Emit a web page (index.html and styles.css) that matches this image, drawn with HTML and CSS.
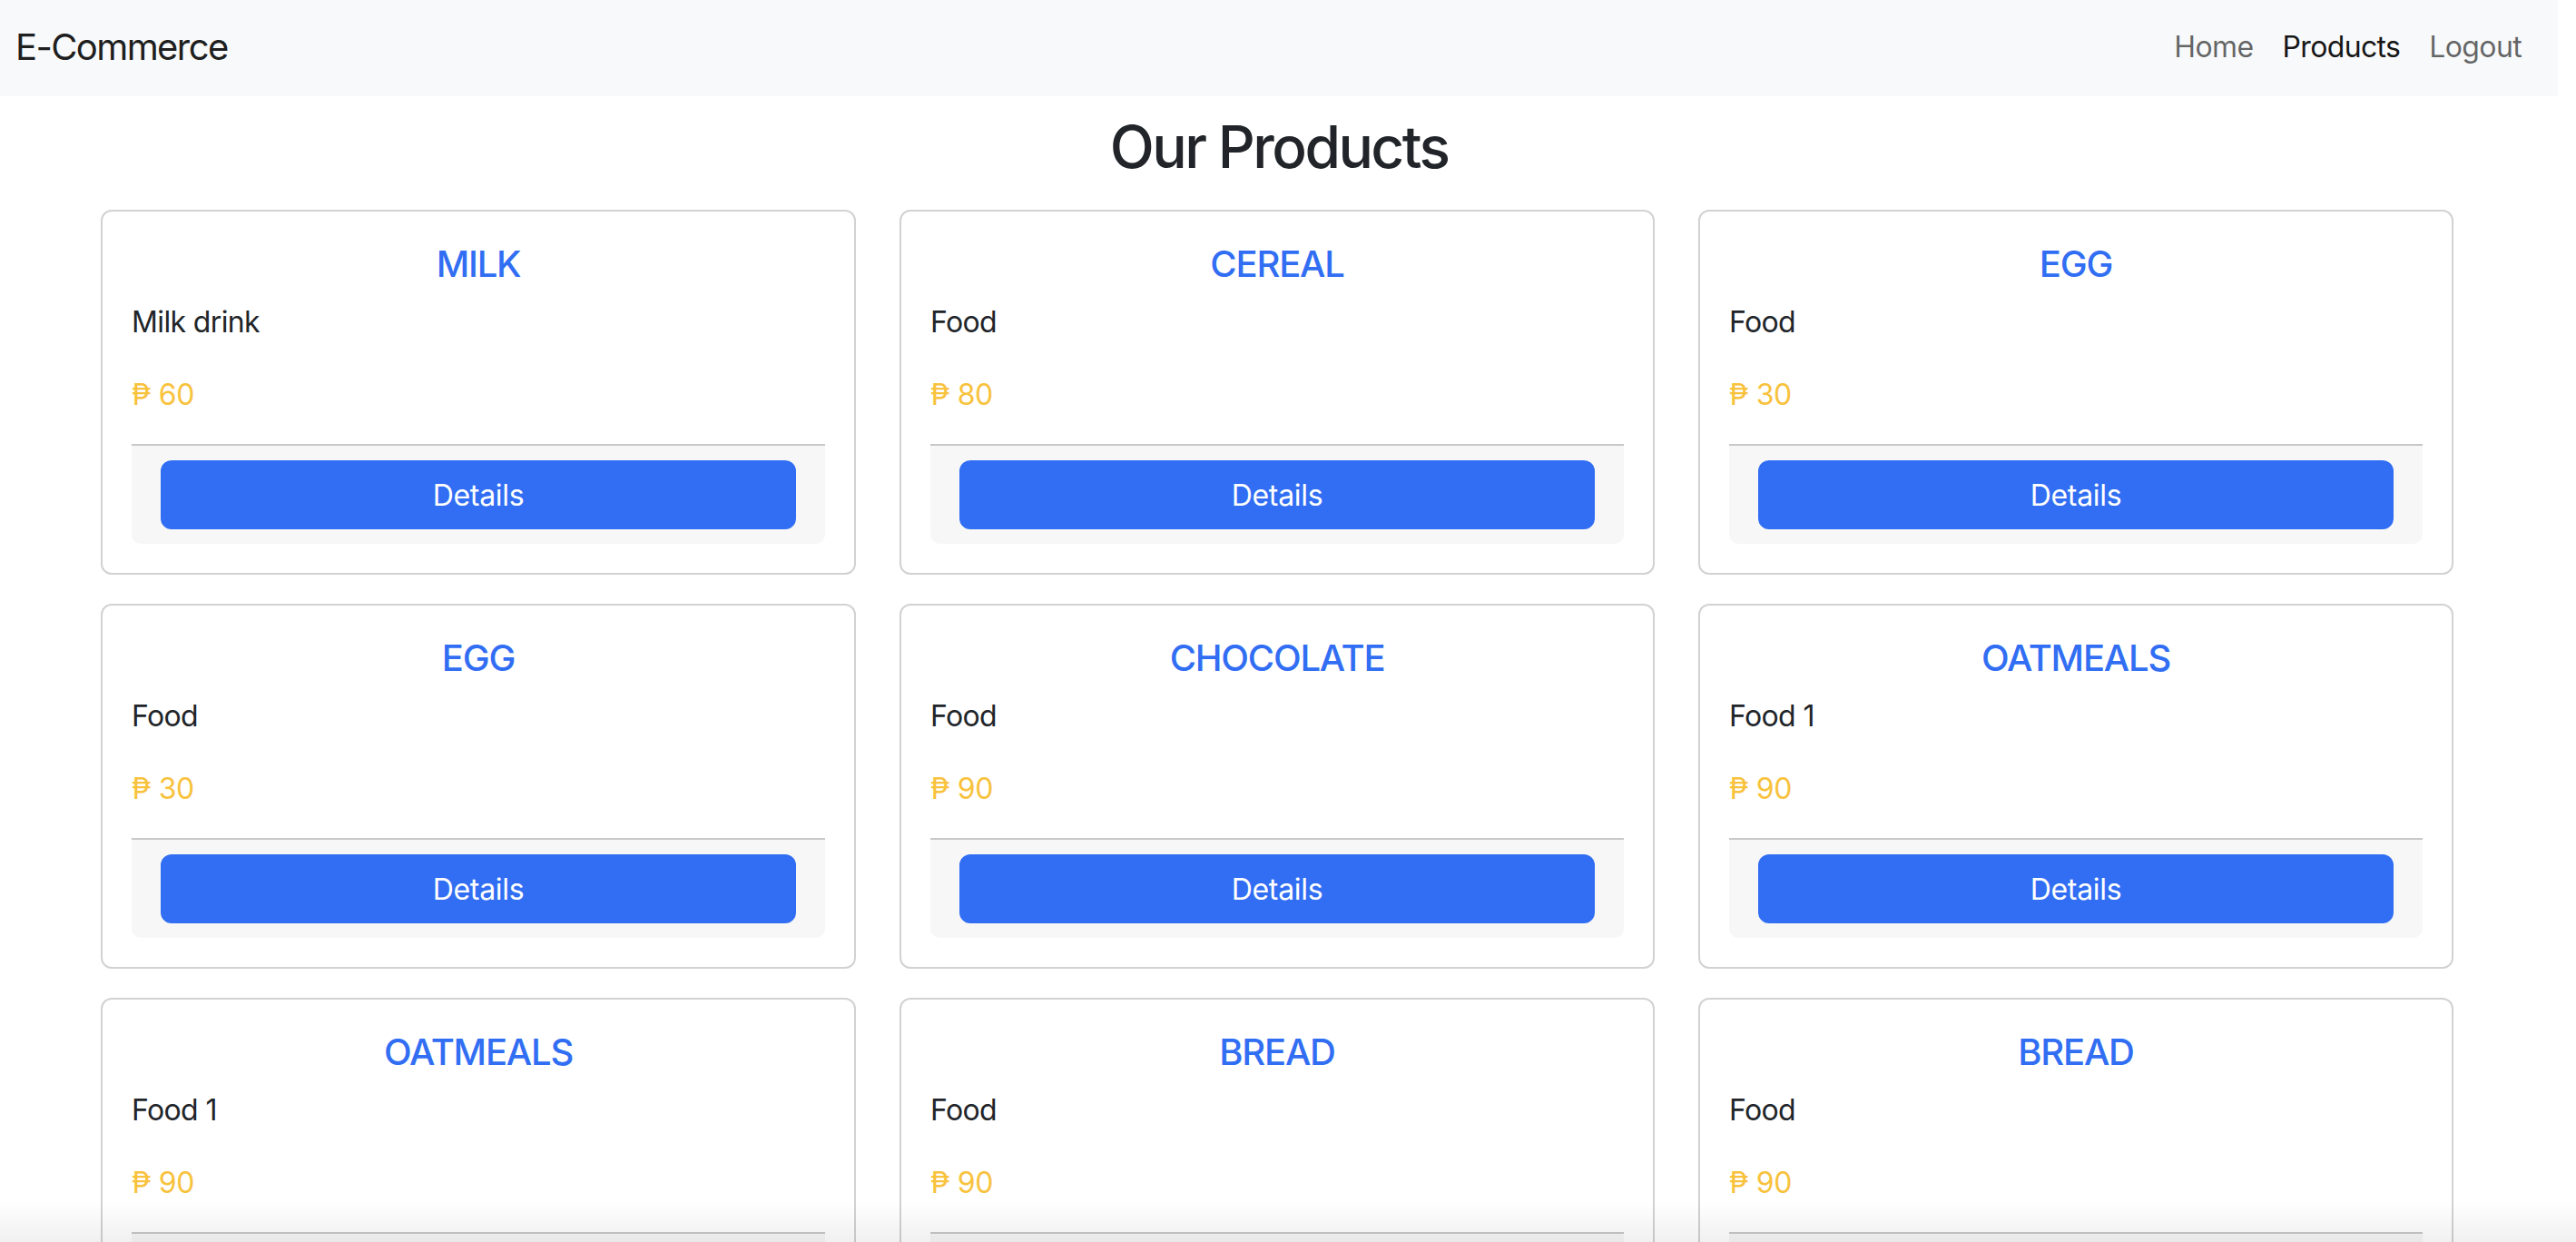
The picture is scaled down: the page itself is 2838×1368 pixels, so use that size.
FILE: index.html
```html
<!DOCTYPE html>
<html lang="en">
<head>
<meta charset="utf-8">
<title>E-Commerce</title>
<link rel="stylesheet" href="styles.css">
</head>
<body>
<div class="page">
  <nav class="navbar">
    <a class="brand" href="#">E-Commerce</a>
    <ul class="nav">
      <li><a class="nav-link" href="#">Home</a></li>
      <li><a class="nav-link active" href="#">Products</a></li>
      <li><a class="nav-link" href="#">Logout</a></li>
    </ul>
  </nav>
  <main>
    <h2 class="page-title">Our Products</h2>
    <div class="products">
      <div class="card"><h5 class="card-title">MILK</h5><p class="desc">Milk drink</p><p class="price">₱ 60</p><div class="card-footer"><button class="btn">Details</button></div></div>
      <div class="card"><h5 class="card-title">CEREAL</h5><p class="desc">Food</p><p class="price">₱ 80</p><div class="card-footer"><button class="btn">Details</button></div></div>
      <div class="card"><h5 class="card-title">EGG</h5><p class="desc">Food</p><p class="price">₱ 30</p><div class="card-footer"><button class="btn">Details</button></div></div>
      <div class="card"><h5 class="card-title">EGG</h5><p class="desc">Food</p><p class="price">₱ 30</p><div class="card-footer"><button class="btn">Details</button></div></div>
      <div class="card"><h5 class="card-title">CHOCOLATE</h5><p class="desc">Food</p><p class="price">₱ 90</p><div class="card-footer"><button class="btn">Details</button></div></div>
      <div class="card"><h5 class="card-title">OATMEALS</h5><p class="desc">Food 1</p><p class="price">₱ 90</p><div class="card-footer"><button class="btn">Details</button></div></div>
      <div class="card"><h5 class="card-title">OATMEALS</h5><p class="desc">Food 1</p><p class="price">₱ 90</p><div class="card-footer"><button class="btn">Details</button></div></div>
      <div class="card"><h5 class="card-title">BREAD</h5><p class="desc">Food</p><p class="price">₱ 90</p><div class="card-footer"><button class="btn">Details</button></div></div>
      <div class="card"><h5 class="card-title">BREAD</h5><p class="desc">Food</p><p class="price">₱ 90</p><div class="card-footer"><button class="btn">Details</button></div></div>
    </div>
  </main>
  <div class="bottom-shade"></div>
</div>
</body>
</html>
```

FILE: styles.css
```css
html {
  overflow: hidden;
}
body {
  margin: 0;
  background: #ffffff;
  font-family: Inter, "Noto Sans", "Liberation Sans", sans-serif;
  color: #212529;
}
.page {
  width: 2818px;
}
.navbar {
  box-sizing: border-box;
  height: 106px;
  background: #f8f9fa;
  display: flex;
  justify-content: space-between;
  align-items: center;
  padding: 0 24px 3px 17px;
}
.brand {
  font-size: 40px;
  line-height: 60px;
  letter-spacing: -0.04em;
  color: rgba(0, 0, 0, 0.9);
  text-decoration: none;
}
.nav {
  list-style: none;
  margin: 0;
  padding: 0;
  display: flex;
}
.nav-link {
  display: block;
  padding: 0 16px;
  font-size: 32px;
  line-height: 48px;
  letter-spacing: -0.02em;
  color: rgba(0, 0, 0, 0.6);
  text-decoration: none;
}
.nav-link.active {
  color: rgba(0, 0, 0, 0.92);
}
.page-title {
  margin: 18px 0 30px;
  text-align: center;
  font-size: 64px;
  font-weight: 500;
  line-height: 1.2;
  letter-spacing: -0.04em;
  color: #212529;
}
.products {
  display: grid;
  grid-template-columns: repeat(3, 832px);
  column-gap: 48px;
  row-gap: 32px;
  padding-left: 111px;
}
.card {
  border: 2px solid #d2d2d2;
  border-radius: 12px;
  padding: 32px;
}
.card-title {
  margin: 0 0 14px;
  padding-top: 2px;
  text-align: center;
  font-size: 40px;
  font-weight: 500;
  line-height: 48px;
  letter-spacing: -0.03em;
  color: #316ef3;
}
.desc {
  margin: 0 0 30px;
  padding-top: 2px;
  font-size: 32px;
  line-height: 48px;
  letter-spacing: -0.02em;
  color: #212529;
}
.price {
  margin: 0 0 30px;
  padding-top: 2px;
  font-size: 32px;
  line-height: 48px;
  letter-spacing: -0.01em;
  color: #f8c23d;
}
.card-footer {
  border-top: 2px solid #c8c8c8;
  background: #f7f7f7;
  padding: 16px 32px;
  border-radius: 0 0 10px 10px;
}
.btn {
  display: block;
  width: 100%;
  box-sizing: border-box;
  height: 76px;
  padding: 13px 24px 11px;
  border: 2px solid #316ef3;
  border-radius: 12px;
  background: #316ef3;
  color: #ffffff;
  font-family: inherit;
  font-size: 32px;
  line-height: 48px;
  letter-spacing: -0.01em;
}
.bottom-shade {
  position: fixed;
  left: 0;
  right: 0;
  bottom: 0;
  height: 44px;
  background: linear-gradient(to bottom, rgba(0, 0, 0, 0), rgba(0, 0, 0, 0.06));
  pointer-events: none;
}
```
